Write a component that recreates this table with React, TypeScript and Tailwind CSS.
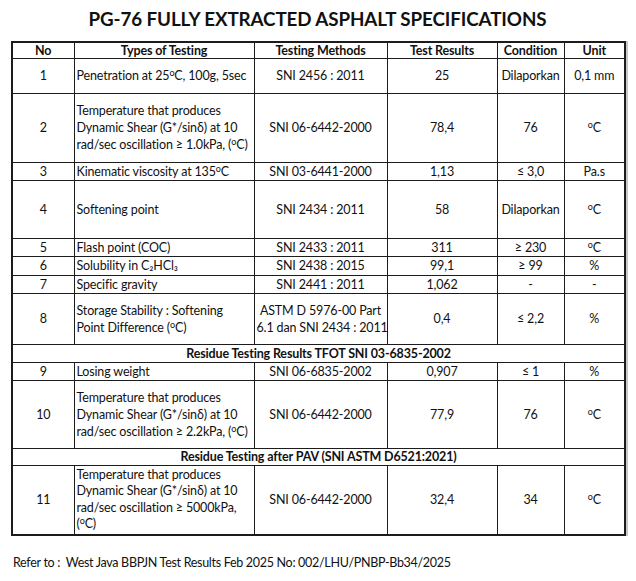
import React from "react";

const Deg = () => (
  <>
    <sup className="text-[9px] top-[-4px]">o</sup>C
  </>
);

type Row = {
  no: string;
  type: React.ReactNode;
  method: React.ReactNode;
  result: string;
  cond: string;
  unit: React.ReactNode;
  h: string;
};

const cell = "border border-[#1c1c1c] px-[2px] py-0 align-middle";

export default function App() {
  const rows1: Row[] = [
    { no: "1", type: <>Penetration at 25<Deg />, 100g, 5sec</>, method: "SNI 2456 : 2011", result: "25", cond: "Dilaporkan", unit: "0,1 mm", h: "h-[34.5px]" },
    { no: "2", type: <>Temperature that produces<br />Dynamic Shear (G*/sinδ) at 10<br />rad/sec oscillation ≥ 1.0kPa, (<Deg />)</>, method: "SNI 06-6442-2000", result: "78,4", cond: "76", unit: <Deg />, h: "h-[69.5px]" },
    { no: "3", type: <>Kinematic viscosity at 135<Deg /></>, method: "SNI 03-6441-2000", result: "1,13", cond: "≤ 3,0", unit: "Pa.s", h: "h-[16.5px]" },
    { no: "4", type: "Softening point", method: "SNI 2434 : 2011", result: "58", cond: "Dilaporkan", unit: <Deg />, h: "h-[57.5px]" },
    { no: "5", type: "Flash point (COC)", method: "SNI 2433 : 2011", result: "311", cond: "≥ 230", unit: <Deg />, h: "h-[18.5px]" },
    { no: "6", type: "Solubility in C₂HCl₃", method: "SNI 2438 : 2015", result: "99,1", cond: "≥ 99", unit: "%", h: "h-[18.5px]" },
    { no: "7", type: "Specific gravity", method: "SNI 2441 : 2011", result: "1,062", cond: "-", unit: "-", h: "h-[17.5px]" },
    { no: "8", type: <>Storage Stability : Softening<br />Point Difference (<Deg />)</>, method: <>ASTM D 5976-00 Part<br />6.1 dan SNI 2434 : 2011</>, result: "0,4", cond: "≤ 2,2", unit: "%", h: "h-[51.5px]" },
  ];
  const rows2: Row[] = [
    { no: "9", type: "Losing weight", method: "SNI 06-6835-2002", result: "0,907", cond: "≤ 1", unit: "%", h: "h-[16.5px]" },
    { no: "10", type: <>Temperature that produces<br />Dynamic Shear (G*/sinδ) at 10<br />rad/sec oscillation ≥ 2.2kPa, (<Deg />)</>, method: "SNI 06-6442-2000", result: "77,9", cond: "76", unit: <Deg />, h: "h-[68.5px]" },
  ];
  const rows3: Row[] = [
    { no: "11", type: <>Temperature that produces<br />Dynamic Shear (G*/sinδ) at 10<br />rad/sec oscillation ≥ 5000kPa,<br />(<Deg />)</>, method: "SNI 06-6442-2000", result: "32,4", cond: "34", unit: <Deg />, h: "h-[69.5px]" },
  ];

  const renderRow = (r: Row) => (
    <tr key={r.no} className={r.h}>
      <td className={`${cell} text-center`}>{r.no}</td>
      <td className={`${cell} text-left whitespace-nowrap ${r.no === "11" ? "leading-[16.5px]" : "leading-[17px]"}`}>{r.type}</td>
      <td className={`${cell} text-center whitespace-nowrap leading-[17px]`}>{r.method}</td>
      <td className={`${cell} text-center`}>{r.result}</td>
      <td className={`${cell} text-center whitespace-nowrap`}>{r.cond}</td>
      <td className={`${cell} text-center whitespace-nowrap`}>{r.unit}</td>
    </tr>
  );

  return (
    <div className="w-[636px] h-[581px] bg-white text-[#111] font-['Lato',sans-serif] text-[12.5px] tracking-[-0.15px] leading-[15px] overflow-hidden">
      <h1 className="pt-[7px] pl-[11px] w-[624px] text-center font-bold text-[18.8px] leading-[24px] tracking-[-0.1px]">
        PG-76 FULLY EXTRACTED ASPHALT SPECIFICATIONS
      </h1>
      <div className="pl-[11px] pt-[10px]">
        <table className="table-fixed border-collapse border-2 border-[#1c1c1c] w-[613px] shadow-[2px_0_0_#c8c8c8]">
          <colgroup>
            <col className="w-[62px]" />
            <col className="w-[180px]" />
            <col className="w-[133px]" />
            <col className="w-[110px]" />
            <col className="w-[67px]" />
            <col className="w-[61px]" />
          </colgroup>
          <thead>
            <tr className="h-[16.5px] font-bold">
              <td className={`${cell} text-center`}>No</td>
              <td className={`${cell} text-center`}>Types of Testing</td>
              <td className={`${cell} text-center`}>Testing Methods</td>
              <td className={`${cell} text-center`}>Test Results</td>
              <td className={`${cell} text-center`}>Condition</td>
              <td className={`${cell} text-center`}>Unit</td>
            </tr>
          </thead>
          <tbody>
            {rows1.map(renderRow)}
            <tr className="h-[17.5px]">
              <td colSpan={6} className={`${cell} text-center font-bold`}>
                Residue Testing Results TFOT SNI 03-6835-2002
              </td>
            </tr>
            {rows2.map(renderRow)}
            <tr className="h-[16.5px]">
              <td colSpan={6} className={`${cell} text-center font-bold`}>
                Residue Testing after PAV (SNI ASTM D6521:2021)
              </td>
            </tr>
            {rows3.map(renderRow)}
          </tbody>
        </table>
      </div>
      <p className="pl-[13px] pt-[19px] whitespace-pre tracking-[-0.3px]">
        {"Refer to :  West Java BBPJN Test Results Feb 2025 No: 002/LHU/PNBP-Bb34/2025"}
      </p>
    </div>
  );
}
